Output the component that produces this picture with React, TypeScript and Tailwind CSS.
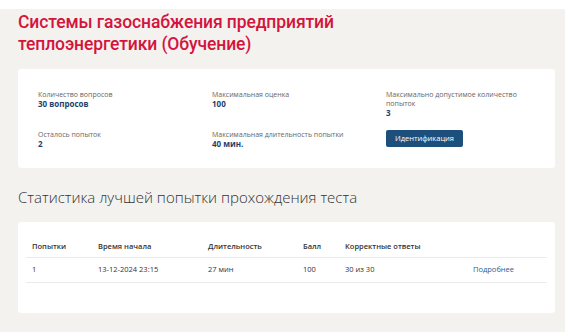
const info = [
    {label: 'Количество вопросов', value: '30 вопросов'},
    {label: 'Максимальная оценка', value: '100'},
    {label: 'Максимально допустимое количество попыток', value: '3'},
    {label: 'Осталось попыток', value: '2'},
    {label: 'Максимальная длительность попытки', value: '40 мин.'},
]

const attempts = [
    {n: '1', start: '13-12-2024 23:15', duration: '27 мин', score: '100', correct: '30 из 30'},
]

function InfoItem({label, value}: {label: string; value: string}) {
    return (
        <div>
            <div className="text-[7px] leading-[9px] text-[#666] max-w-[140px]">{label}</div>
            <div className="text-[8px] leading-[10px] font-bold text-[#1d3f6c]">{value}</div>
        </div>
    )
}

export default function App() {
    return (
        <div className="min-h-screen bg-white" style={{fontFamily: '"Open Sans", sans-serif'}}>
            <div className="h-[9px] bg-white" />
            <div className="bg-[#f3f2ef] px-[18px] pr-[10px] pb-[20px]">
                <h1
                    className="pt-[2px] text-[17.5px] leading-[22px] font-medium tracking-[-0.1px] text-[#d3143d]"
                    style={{fontFamily: 'Roboto, sans-serif'}}
                >
                    Системы газоснабжения предприятий
                    <br />
                    теплоэнергетики (Обучение)
                </h1>

                <div className="mt-[14px] bg-white rounded-[3px] pl-[20px] pt-[21px] pb-[19px]">
                    <div className="grid grid-cols-[174px_174px_1fr] gap-y-[12px]">
                        <InfoItem {...info[0]} />
                        <InfoItem {...info[1]} />
                        <InfoItem {...info[2]} />
                        <InfoItem {...info[3]} />
                        <InfoItem {...info[4]} />
                        <div className="flex items-start">
                            <button className="block h-[17px] w-[77px] rounded-[2px] bg-[#1d4f7d] text-[7.5px] leading-[17px] font-normal text-white">
                                Идентификация
                            </button>
                        </div>
                    </div>
                </div>

                <h2 className="mt-[17px] text-[15px] leading-[24px] font-light text-[#333]">
                    Статистика лучшей попытки прохождения теста
                </h2>

                <div className="mt-[13px] bg-white rounded-[3px] px-[8px] pt-[14px] pb-[30px]">
                    <table className="w-full text-[7.5px] text-[#333] border-collapse">
                        <thead>
                            <tr className="border-b border-[#ebebeb]">
                                <th className="w-[66px] px-[6px] py-[5px] text-left font-semibold">Попытки</th>
                                <th className="w-[110px] px-[6px] py-[5px] text-left font-semibold">Время начала</th>
                                <th className="w-[95px] px-[6px] py-[5px] text-left font-semibold">Длительность</th>
                                <th className="w-[42px] px-[6px] py-[5px] text-left font-semibold">Балл</th>
                                <th className="w-[128px] px-[6px] py-[5px] text-left font-semibold">Корректные ответы</th>
                                <th className="px-[6px] py-[5px]" />
                            </tr>
                        </thead>
                        <tbody>
                            {attempts.map((a) => (
                                <tr key={a.n} className="border-b border-[#ebebeb]">
                                    <td className="px-[6px] py-[6px]">{a.n}</td>
                                    <td className="px-[6px] py-[6px]">{a.start}</td>
                                    <td className="px-[6px] py-[6px]">{a.duration}</td>
                                    <td className="px-[6px] py-[6px]">{a.score}</td>
                                    <td className="px-[6px] py-[6px]">{a.correct}</td>
                                    <td className="px-[6px] py-[6px]">
                                        <a className="text-[#2c5d8e]">Подробнее</a>
                                    </td>
                                </tr>
                            ))}
                        </tbody>
                    </table>
                </div>
            </div>
        </div>
    )
}
